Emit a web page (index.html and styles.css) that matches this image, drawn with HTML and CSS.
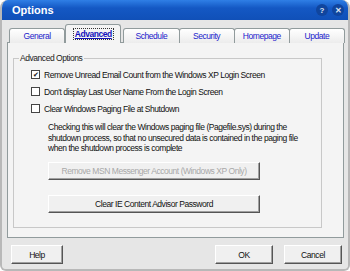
FILE: index.html
```html
<!DOCTYPE html>
<html lang="en">
<head>
    <meta charset="UTF-8">
    <title>Options</title>
    <link rel="stylesheet" href="styles.css">
</head>
<body>
    <div class="window">
      <div class="titlebar">
        <span class="title">Options</span>
        <div class="caption-btns">
          <span class="cap-btn">?</span>
          <span class="cap-btn">&#x2715;</span>
        </div>
      </div>

      <div class="body">
        <div class="tabs">
          <div class="tab">General</div>
          <div class="tab active"><span class="focus">Advanced</span></div>
          <div class="tab">Schedule</div>
          <div class="tab">Security</div>
          <div class="tab">Homepage</div>
          <div class="tab">Update</div>
        </div>

        <div class="panel">
          <div class="group">
            <span class="legend">Advanced Options</span>
            <label class="check"><span class="box checked">&#x2714;</span>Remove Unread Email Count from the Windows XP Login Screen</label>
            <label class="check"><span class="box"></span>Don't display Last User Name From the Login Screen</label>
            <label class="check"><span class="box"></span>Clear Windows Paging File at Shutdown</label>
            <p class="desc">Checking this will clear the Windows paging file (Pagefile.sys) during the shutdown process, so that no unsecured data is contained in the paging file when the shutdown process is complete</p>
            <button class="btn wide" disabled>Remove MSN Messenger Account (Windows XP Only)</button>
            <button class="btn wide">Clear IE Content Advisor Password</button>
          </div>
        </div>

        <div class="footer">
          <button class="btn small">Help</button>
          <div class="right">
            <button class="btn small">OK</button>
            <button class="btn small">Cancel</button>
          </div>
        </div>
      </div>
    </div>
</body>
</html>
```

FILE: styles.css
```css
*{
  padding: 0;
  margin: 0;
  box-sizing: border-box;
}

body {
  background: #fff;
  font-family: "Liberation Sans", Arial, sans-serif;
  font-size: 8.5px;
  letter-spacing: -0.45px;
  color: #111;
}

/*outer window frame*/
.window {
  width: 350px;
  height: 271px;
  display: flex;
  flex-direction: column;
  background: #d6d6d6;
  border-radius: 8px 8px 6px 6px;
  border: 2px solid #b8b8b8;
  border-top: none;
  overflow: hidden;
}

.titlebar {
  height: 20px;
  display: flex;
  align-items: center;
  justify-content: space-between;
  padding: 0 4px 0 10px;
  background: linear-gradient(#2f7fe6, #1458c4 40%, #1050b8);
  color: #fff;
}

.title {
  font-weight: bold;
  font-size: 11px;
  letter-spacing: 0;
}

.caption-btns {
  display: flex;
  gap: 4px;
}

.cap-btn {
  width: 12px;
  height: 12px;
  border-radius: 50%;
  background: #10459e;
  color: #dfe6f2;
  font-size: 8px;
  font-weight: bold;
  letter-spacing: 0;
  display: flex;
  align-items: center;
  justify-content: center;
}

.body {
  flex: 1;
  display: flex;
  flex-direction: column;
  padding: 7px 4px 4px 5px;
  background: #e6e6e6;
}

/*tab strip*/
.tabs {
  display: flex;
  align-items: flex-end;
  height: 16px;
  padding-left: 2px;
  position: relative;
  z-index: 1;
}

.tab {
  flex: 1;
  height: 15px;
  display: flex;
  align-items: center;
  justify-content: center;
  border: 1px solid #919b9c;
  border-bottom: none;
  border-radius: 3px 3px 0 0;
  background: linear-gradient(#ffffff, #ececec);
  color: #2222cc;
  margin-right: -1px;
}

.tab.active {
  height: 19px;
  margin: 0 2px 0 1px;
  background: #f4f4f4;
  font-weight: bold;
  color: #1111bb;
}

.focus {
  border: 1px dotted #333;
  padding: 0 1px;
  text-decoration: underline;
}

/*tab page*/
.panel {
  height: 196px;
  margin-top: -1px;
  border: 1px solid #919b9c;
  background: #f4f4f4;
  padding: 15px 21px 10px 5px;
}

.group {
  height: 170px;
  border: 1px solid #c8c8c8;
  position: relative;
  padding: 7px 0 0 17px;
  display: flex;
  flex-direction: column;
}

.legend {
  position: absolute;
  top: -6px;
  left: 5px;
  background: #f4f4f4;
  padding: 0 2px 0 1px;
  color: #222;
}

.check {
  display: flex;
  align-items: center;
  gap: 4px;
  height: 17px;
}

.box {
  width: 9px;
  height: 9px;
  border: 1px solid #444;
  background: #fff;
  font-size: 7px;
  line-height: 7px;
  text-align: center;
  color: #111;
  letter-spacing: 0;
}

.desc {
  margin: 5px 0 0 17px;
  width: 264px;
  line-height: 10.5px;
}

.btn {
  font-family: inherit;
  font-size: 8.5px;
  letter-spacing: -0.45px;
  color: #111;
  background: #f0f0f0;
  border: 1px solid #fff;
  border-right-color: #555;
  border-bottom-color: #555;
  box-shadow: inset -1px -1px 0 #a0a0a0;
}

.btn:disabled {
  color: #a8a8a8;
}

.btn.wide {
  width: 212px;
  height: 18px;
  margin-left: 17px;
  margin-top: 8px;
}

.btn.wide + .btn.wide {
  margin-top: 15px;
}

/*bottom buttons*/
.footer {
  display: flex;
  justify-content: space-between;
  align-items: center;
  padding: 7px 2px 0 4px;
}

.right {
  display: flex;
  gap: 11px;
}

.btn.small {
  width: 52px;
  height: 19px;
}

.right .btn.small {
  width: 58px;
}
```
